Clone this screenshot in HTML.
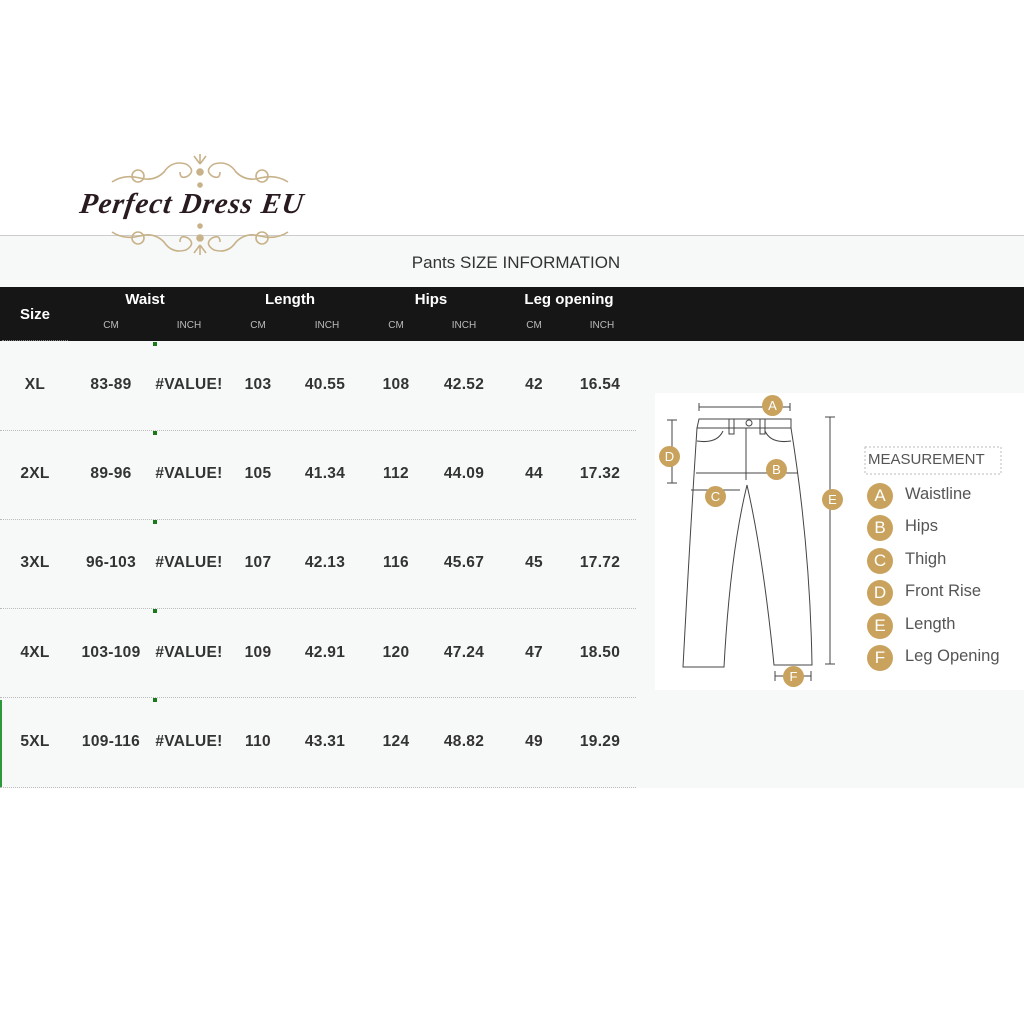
<!DOCTYPE html>
<html><head><meta charset="utf-8"><style>
*{margin:0;padding:0;box-sizing:border-box}
body{width:1024px;height:1024px;background:#fff;position:relative;overflow:hidden;font-family:"Liberation Sans",sans-serif;color:#333}
.t{position:absolute;transform:translateX(-50%);white-space:nowrap}
.panel{position:absolute;left:0;top:235px;width:1024px;height:553px;background:#f7f9f8;border-top:1px solid #ccc}
.hdr{position:absolute;left:0;top:287px;width:1024px;height:54px;background:#161616}
.h{color:#fff;font-weight:bold;font-size:15px}
.s{color:#bbb;font-size:10px}
.d{font-weight:bold;font-size:15.5px;color:#333;letter-spacing:0.3px}
.line{position:absolute;left:0;width:636px;border-top:1px dotted #bbb}
.gm{position:absolute;width:4px;height:4px;background:#1a7a1a}
.c{position:absolute;width:21px;height:21px;border-radius:50%;background:#c9a35d;color:#fff;font-size:13px;text-align:center;line-height:21px}
.c2{font-size:17px}
.m{position:absolute;left:905px;font-size:16.5px;color:#555}
</style></head><body>
<div class="panel"></div>
<div style="position:absolute;left:0;top:700px;width:2px;height:88px;background:#2a9a3a"></div>
<div class="t" style="left:516px;top:253px;font-size:17px;color:#333">Pants SIZE INFORMATION</div>
<div class="hdr"></div>
<div style="position:absolute;left:2px;top:340px;width:66px;border-top:1px dotted #888"></div>
<div class="t h" style="left:35px;top:306px">Size</div>
<div class="t h" style="left:145px;top:291px">Waist</div>
<div class="t h" style="left:290px;top:291px">Length</div>
<div class="t h" style="left:431px;top:291px">Hips</div>
<div class="t h" style="left:569px;top:291px">Leg opening</div>
<div class="t s" style="left:111px;top:320px">CM</div>
<div class="t s" style="left:189px;top:320px">INCH</div>
<div class="t s" style="left:258px;top:320px">CM</div>
<div class="t s" style="left:327px;top:320px">INCH</div>
<div class="t s" style="left:396px;top:320px">CM</div>
<div class="t s" style="left:464px;top:320px">INCH</div>
<div class="t s" style="left:534px;top:320px">CM</div>
<div class="t s" style="left:602px;top:320px">INCH</div>

<div class="line" style="top:430px"></div>
<div class="line" style="top:519px"></div>
<div class="line" style="top:608px"></div>
<div class="line" style="top:697px"></div>
<div class="line" style="top:787px"></div>
<div class="gm" style="left:153px;top:342px"></div>
<div class="gm" style="left:153px;top:431px"></div>
<div class="gm" style="left:153px;top:520px"></div>
<div class="gm" style="left:153px;top:609px"></div>
<div class="gm" style="left:153px;top:698px"></div>

<div style="position:absolute;left:0;top:376px;width:640px">
<div class="t d" style="left:35px;top:0">XL</div><div class="t d" style="left:111px;top:0">83-89</div><div class="t d" style="left:189px;top:0">#VALUE!</div><div class="t d" style="left:258px;top:0">103</div><div class="t d" style="left:325px;top:0">40.55</div><div class="t d" style="left:396px;top:0">108</div><div class="t d" style="left:464px;top:0">42.52</div><div class="t d" style="left:534px;top:0">42</div><div class="t d" style="left:600px;top:0">16.54</div>
</div>
<div style="position:absolute;left:0;top:465px;width:640px">
<div class="t d" style="left:35px;top:0">2XL</div><div class="t d" style="left:111px;top:0">89-96</div><div class="t d" style="left:189px;top:0">#VALUE!</div><div class="t d" style="left:258px;top:0">105</div><div class="t d" style="left:325px;top:0">41.34</div><div class="t d" style="left:396px;top:0">112</div><div class="t d" style="left:464px;top:0">44.09</div><div class="t d" style="left:534px;top:0">44</div><div class="t d" style="left:600px;top:0">17.32</div>
</div>
<div style="position:absolute;left:0;top:554px;width:640px">
<div class="t d" style="left:35px;top:0">3XL</div><div class="t d" style="left:111px;top:0">96-103</div><div class="t d" style="left:189px;top:0">#VALUE!</div><div class="t d" style="left:258px;top:0">107</div><div class="t d" style="left:325px;top:0">42.13</div><div class="t d" style="left:396px;top:0">116</div><div class="t d" style="left:464px;top:0">45.67</div><div class="t d" style="left:534px;top:0">45</div><div class="t d" style="left:600px;top:0">17.72</div>
</div>
<div style="position:absolute;left:0;top:644px;width:640px">
<div class="t d" style="left:35px;top:0">4XL</div><div class="t d" style="left:111px;top:0">103-109</div><div class="t d" style="left:189px;top:0">#VALUE!</div><div class="t d" style="left:258px;top:0">109</div><div class="t d" style="left:325px;top:0">42.91</div><div class="t d" style="left:396px;top:0">120</div><div class="t d" style="left:464px;top:0">47.24</div><div class="t d" style="left:534px;top:0">47</div><div class="t d" style="left:600px;top:0">18.50</div>
</div>
<div style="position:absolute;left:0;top:733px;width:640px">
<div class="t d" style="left:35px;top:0">5XL</div><div class="t d" style="left:111px;top:0">109-116</div><div class="t d" style="left:189px;top:0">#VALUE!</div><div class="t d" style="left:258px;top:0">110</div><div class="t d" style="left:325px;top:0">43.31</div><div class="t d" style="left:396px;top:0">124</div><div class="t d" style="left:464px;top:0">48.82</div><div class="t d" style="left:534px;top:0">49</div><div class="t d" style="left:600px;top:0">19.29</div>
</div>

<!-- logo -->
<svg style="position:absolute;left:80px;top:152px" width="240" height="105" viewBox="0 0 240 105" fill="none" stroke="#c8b28a" stroke-width="1.6">
<path d="M32 30 q12 -8 28 -4 q14 4 24 -6 q8 -12 22 -8 q10 6 2 12 q-8 4 -8 -4"/>
<path d="M208 30 q-12 -8 -28 -4 q-14 4 -24 -6 q-8 -12 -22 -8 q-10 6 -2 12 q8 4 8 -4"/>
<path d="M32 80 q12 8 28 4 q14 -4 24 6 q8 12 22 8 q10 -6 2 -12 q-8 -4 -8 4"/>
<path d="M208 80 q-12 8 -28 4 q-14 -4 -24 6 q-8 12 -22 8 q-10 -6 -2 -12 q8 -4 8 4"/>
<circle cx="58" cy="24" r="6"/><circle cx="182" cy="24" r="6"/><circle cx="58" cy="86" r="6"/><circle cx="182" cy="86" r="6"/>
<path d="M120 2 v10 M114 4 l6 8 M126 4 l-6 8 M120 93 v10 M114 101 l6 -8 M126 101 l-6 -8"/>
<circle cx="120" cy="20" r="3" fill="#c8b28a"/><circle cx="120" cy="86" r="3" fill="#c8b28a"/>
<circle cx="120" cy="33" r="2" fill="#c8b28a"/><circle cx="120" cy="74" r="2" fill="#c8b28a"/>
</svg>
<div style="position:absolute;left:80px;top:188px;font-family:'Liberation Serif',serif;font-style:italic;font-weight:bold;font-size:29px;color:#2a1a22;letter-spacing:1px;transform:skewX(-8deg)">Perfect Dress EU</div>

<!-- pants panel -->
<div style="position:absolute;left:655px;top:393px;width:369px;height:297px;background:#fff"></div>
<svg style="position:absolute;left:650px;top:385px" width="374" height="310" viewBox="0 0 374 310" fill="none" stroke="#444" stroke-width="1">
<path d="M49 34 L141 34 L141 43 L47 43 Z"/>
<path d="M47 43 Q40 150 33 282 L74 282 Q80 170 97 100 Q113 170 124 280 L162 280 Q160 160 141 43"/>
<path d="M46 88 L148 88 M41 105 L90 105 M96 43 L96 95"/>
<path d="M79 34 v15 h5 v-15 M110 34 v15 h5 v-15 M47 56 q20 3 26 -10 M141 56 q-20 3 -26 -10"/>
<circle cx="99" cy="38" r="3"/>
<path d="M49 22 L140 22 M49 18 v8 M140 18 v8" />
<path d="M22 35 v63 M17 35 h10 M17 98 h10"/>
<path d="M180 32 v247 M175 32 h10 M175 279 h10"/>
<path d="M125 291 h36 M125 286 v10 M161 286 v10"/>
<rect x="215" y="62" width="136" height="27" stroke="#bbb" stroke-dasharray="2 2"/>
</svg>
<div class="c" style="left:762px;top:395px">A</div>
<div class="c" style="left:766px;top:459px">B</div>
<div class="c" style="left:705px;top:486px">C</div>
<div class="c" style="left:659px;top:446px">D</div>
<div class="c" style="left:822px;top:489px">E</div>
<div class="c" style="left:783px;top:666px">F</div>
<div style="position:absolute;left:868px;top:451px;font-size:15px;color:#555">MEASUREMENT</div>
<div class="c c2" style="left:867px;top:483px;width:26px;height:26px;line-height:26px">A</div><div class="m" style="top:485px">Waistline</div>
<div class="c c2" style="left:867px;top:515px;width:26px;height:26px;line-height:26px">B</div><div class="m" style="top:517px">Hips</div>
<div class="c c2" style="left:867px;top:548px;width:26px;height:26px;line-height:26px">C</div><div class="m" style="top:550px">Thigh</div>
<div class="c c2" style="left:867px;top:580px;width:26px;height:26px;line-height:26px">D</div><div class="m" style="top:582px">Front Rise</div>
<div class="c c2" style="left:867px;top:613px;width:26px;height:26px;line-height:26px">E</div><div class="m" style="top:615px">Length</div>
<div class="c c2" style="left:867px;top:645px;width:26px;height:26px;line-height:26px">F</div><div class="m" style="top:647px">Leg Opening</div>
</body></html>
